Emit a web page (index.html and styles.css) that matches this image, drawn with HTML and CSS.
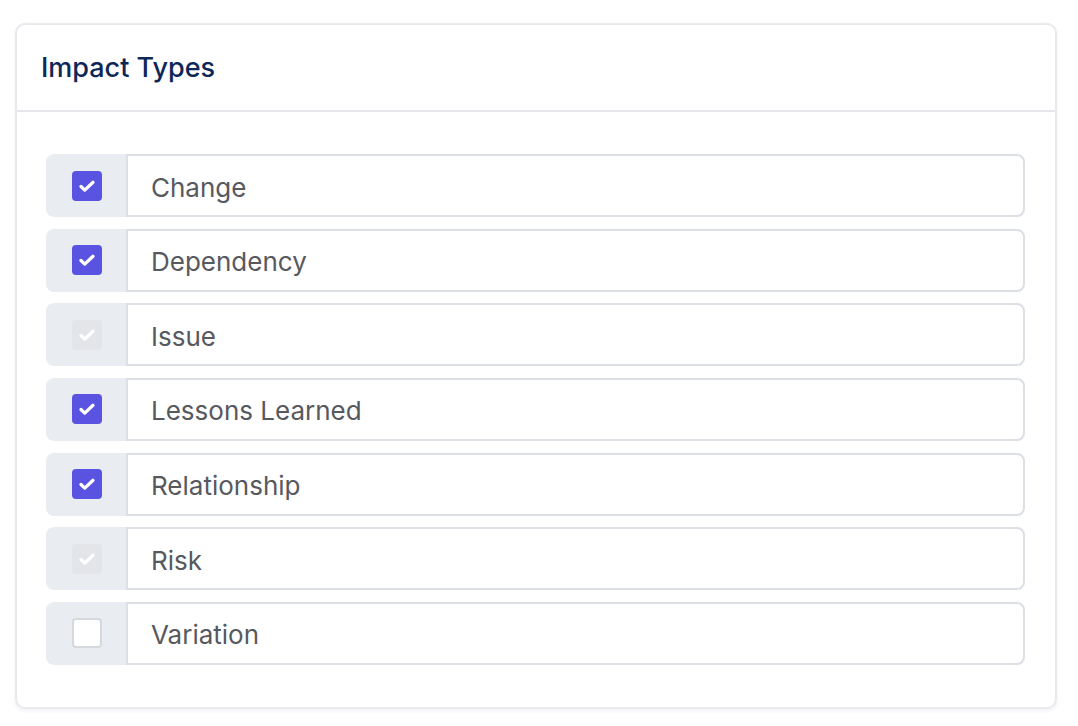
FILE: index.html
```html
<!DOCTYPE html>
<html lang="en">
<head>
  <meta charset="UTF-8">
  <meta name="viewport" content="width=device-width, initial-scale=1.0">
  <title>Impact Types</title>
  <link rel="stylesheet" href="styles.css">
</head>
<body>
  <div class="card">
    <div class="card-header">
      <h2>Impact Types</h2>
    </div>

    <div class="card-body">
      <div class="row">
        <div class="addon"><span class="box checked"><svg viewBox="0 0 16 16"><path d="M3.2 8.4l3 2.9L12.8 5"/></svg></span></div>
        <div class="field">Change</div>
      </div>
      <div class="row">
        <div class="addon"><span class="box checked"><svg viewBox="0 0 16 16"><path d="M3.2 8.4l3 2.9L12.8 5"/></svg></span></div>
        <div class="field">Dependency</div>
      </div>
      <div class="row">
        <div class="addon"><span class="box disabled"><svg viewBox="0 0 16 16"><path d="M3.2 8.4l3 2.9L12.8 5"/></svg></span></div>
        <div class="field">Issue</div>
      </div>
      <div class="row">
        <div class="addon"><span class="box checked"><svg viewBox="0 0 16 16"><path d="M3.2 8.4l3 2.9L12.8 5"/></svg></span></div>
        <div class="field">Lessons Learned</div>
      </div>
      <div class="row">
        <div class="addon"><span class="box checked"><svg viewBox="0 0 16 16"><path d="M3.2 8.4l3 2.9L12.8 5"/></svg></span></div>
        <div class="field">Relationship</div>
      </div>
      <div class="row">
        <div class="addon"><span class="box disabled"><svg viewBox="0 0 16 16"><path d="M3.2 8.4l3 2.9L12.8 5"/></svg></span></div>
        <div class="field">Risk</div>
      </div>
      <div class="row">
        <div class="addon"><span class="box"></span></div>
        <div class="field">Variation</div>
      </div>
    </div>
  </div>
</body>
</html>
```

FILE: styles.css
```css
body {
  font-family: Inter, "Noto Sans", sans-serif;
  margin: 0;
  padding: 23px 21px 19px 15px;
  background-color: #ffffff;
}

.card {
  border: 2px solid #e8eaee;
  border-radius: 10px;
  box-shadow: 0 2px 4px rgba(15, 23, 42, 0.06);
  background-color: #fff;
}

.card-header {
  height: 85px;
  padding: 0 24px;
  display: flex;
  align-items: center;
  border-bottom: 2px solid #e5e7eb;
}

.card-header h2 {
  margin: 0;
  font-size: 27px;
  font-weight: 500;
  color: #0d2857;
}

.card-body {
  padding: 42px 30px 42px 29px;
  display: flex;
  flex-direction: column;
  gap: 11.67px;
}

.row {
  display: flex;
  height: 63px;
}

.addon {
  width: 80px;
  padding-left: 2px;
  box-sizing: border-box;
  background-color: #e9ecf1;
  border-radius: 8px 0 0 8px;
  display: flex;
  align-items: center;
  justify-content: center;
}

.field {
  flex: 1;
  border: 2px solid #dcdfe4;
  border-radius: 0 8px 8px 0;
  display: flex;
  align-items: center;
  padding: 3px 0 0 23px;
  font-size: 26px;
  color: #57595e;
}

.box {
  width: 30px;
  height: 30px;
  box-sizing: border-box;
  border-radius: 4px;
  border: 2px solid #d5d8dd;
  background-color: #fff;
  display: flex;
  align-items: center;
  justify-content: center;
}

.box svg {
  width: 20px;
  height: 20px;
  fill: none;
  stroke: #fff;
  stroke-width: 2.6;
  stroke-linecap: round;
  stroke-linejoin: round;
}

.box.checked {
  background-color: #5a53e1;
  border-color: #5a53e1;
}

.box.disabled {
  background-color: #e3e5e9;
  border-color: #e3e5e9;
}
```
